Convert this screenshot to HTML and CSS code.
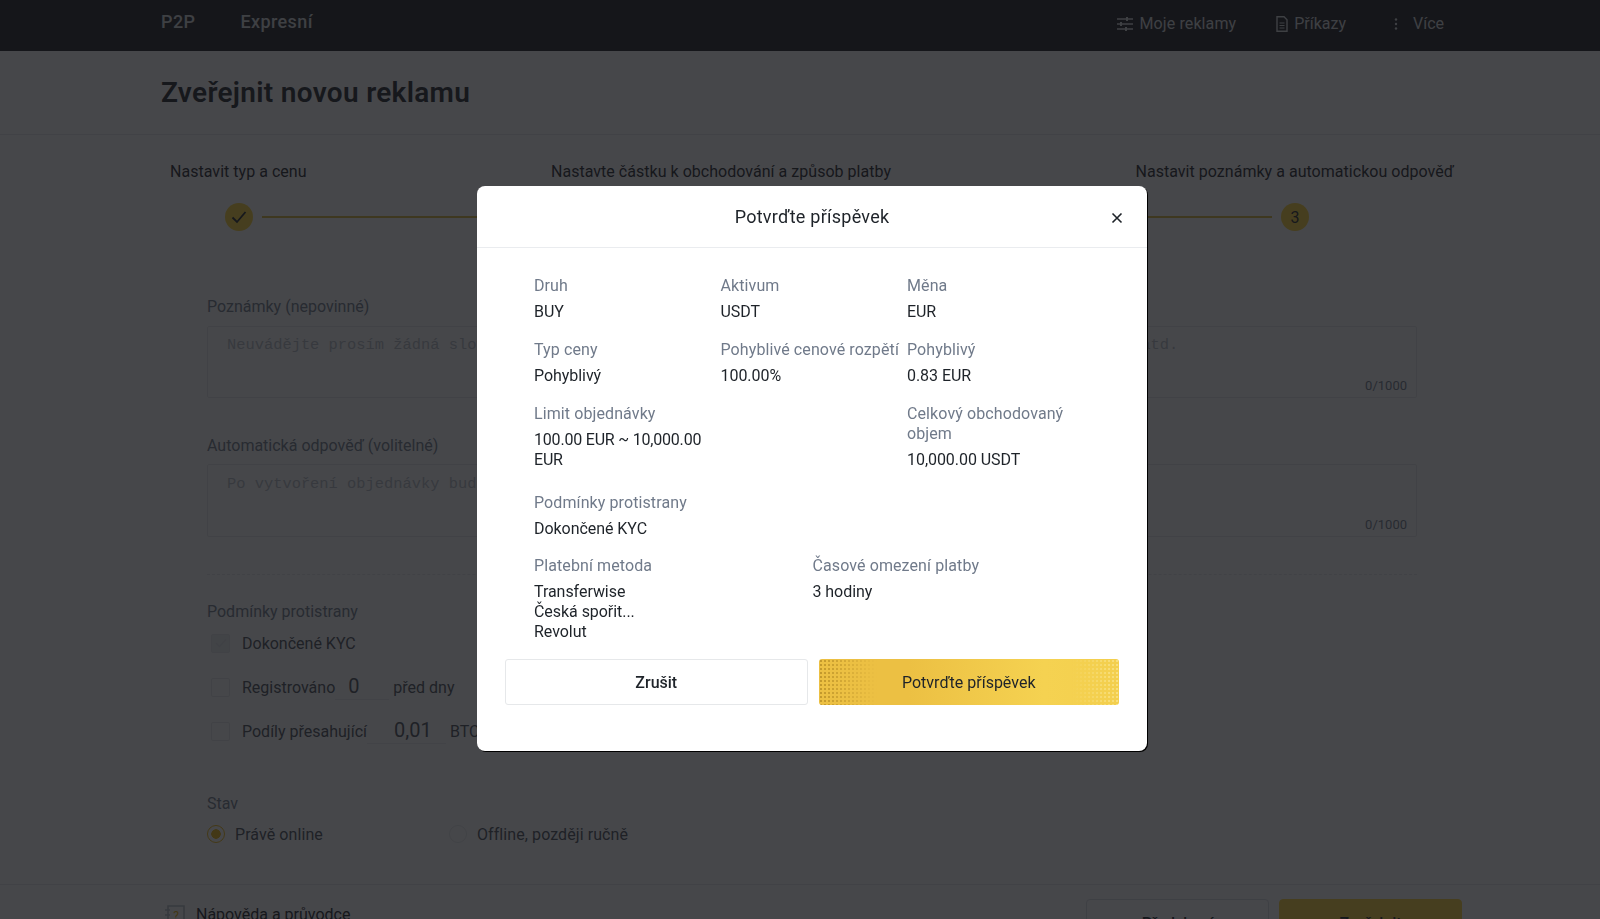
FILE: index.html
```html
<!DOCTYPE html>
<html lang="cs">
<head>
<meta charset="utf-8">
<title>Zveřejnit novou reklamu</title>
<link rel="stylesheet" href="styles.css">
</head>
<body>
<div class="page">
  <nav class="nav">
    <div class="nav-left"><a>P2P</a><a>Expresní</a></div>
    <div class="nav-right">
      <a class="gap-m"><svg class="ico" viewBox="0 0 16 14" width="16" height="14"><path d="M0 2h16M0 7h16M0 12h16" stroke="currentColor" stroke-width="1.6"/><path d="M10 0v4M4 5v4M9 10v4" stroke="currentColor" stroke-width="2"/></svg>Moje reklamy</a>
      <a class="gap-s"><svg class="ico" viewBox="0 0 12 16" width="12" height="16"><path d="M1 .8h7l3 3v11.4H1z" fill="none" stroke="currentColor" stroke-width="1.4"/><path d="M3.5 7h5M3.5 9.5h5M3.5 12h5" stroke="currentColor" stroke-width="1.2"/></svg>Příkazy</a>
      <a class="more"><svg class="ico" viewBox="0 0 4 12" width="4" height="12"><circle cx="2" cy="1.5" r="1.2" fill="currentColor"/><circle cx="2" cy="6" r="1.2" fill="currentColor"/><circle cx="2" cy="10.5" r="1.2" fill="currentColor"/></svg>Více</a>
    </div>
  </nav>
  <header class="head"><h1>Zveřejnit novou reklamu</h1></header>
  <section class="stepper">
    <div class="step-labels">
      <span>Nastavit typ a cenu</span>
      <span>Nastavte částku k obchodování a způsob platby</span>
      <span>Nastavit poznámky a automatickou odpověď</span>
    </div>
    <div class="step-track">
      <span class="dot"><svg viewBox="0 0 16 14" width="16" height="14"><path d="M1.5 7.5l4.5 4.5L14.5 2" fill="none" stroke="#1e2329" stroke-width="1.8"/></svg></span>
      <i class="line"></i>
      <span class="dot"></span>
      <i class="line"></i>
      <span class="dot">3</span>
    </div>
  </section>
  <main class="form">
    <label class="lbl">Poznámky (nepovinné)</label>
    <div class="ta">
      <textarea class="area" placeholder="Neuvádějte prosím žádná slova týkající se kryptoměn, jako BTC, USDT, ETH, ani bankovní účet, apod. atd."></textarea>
      <span class="count">0/1000</span>
    </div>
    <label class="lbl second">Automatická odpověď (volitelné)</label>
    <div class="ta tall">
      <textarea class="area" placeholder="Po vytvoření objednávky bude tato zpráva odeslána protistraně."></textarea>
      <span class="count">0/1000</span>
    </div>
    <div class="dash"></div>
    <label class="lbl cond">Podmínky protistrany</label>
    <div class="chk first"><span class="box on"><svg viewBox="0 0 12 10" width="12" height="10"><path d="M1 5l3.5 3.5L11 1.5" fill="none" stroke="#dfe2e6" stroke-width="1.4"/></svg></span>Dokončené KYC</div>
    <div class="chk"><span class="box"></span>Registrováno<span class="num w1">0</span>před dny</div>
    <div class="chk"><span class="box"></span>Podíly přesahující<span class="num w2">0,01</span>BTC</div>
    <label class="lbl stav">Stav</label>
    <div class="radios">
      <span class="radio"><i class="rd on"></i>Právě online</span>
      <span class="radio"><i class="rd"></i>Offline, později ručně</span>
    </div>
  </main>
  <footer class="foot">
    <div class="help"><svg viewBox="0 0 20 20" width="20" height="20"><path d="M3 1h16v18H3z" fill="none" stroke="#b7bdc6" stroke-width="1.6"/><path d="M0 5h5M0 10h5M0 15h5" stroke="#b7bdc6" stroke-width="1.4"/><text x="11" y="15" font-size="12" text-anchor="middle" fill="#f0b90b">?</text></svg>Nápověda a průvodce</div>
    <div class="foot-btns"><button class="fb">Předchozí</button><button class="fb pri">Zveřejnit</button></div>
  </footer>
</div>
<div class="mask">
  <div class="modal">
    <div class="m-head">Potvrďte příspěvek
      <svg class="close" viewBox="0 0 12 12" width="12" height="12"><path d="M1.5 1.5l9 9M10.5 1.5l-9 9" stroke="#1e2329" stroke-width="1.6"/></svg>
    </div>
    <div class="m-body">
      <div class="g3">
        <div class="it"><p>Druh</p><b>BUY</b></div>
        <div class="it"><p>Aktivum</p><b>USDT</b></div>
        <div class="it"><p>Měna</p><b>EUR</b></div>
        <div class="it"><p>Typ ceny</p><b>Pohyblivý</b></div>
        <div class="it"><p>Pohyblivé cenové rozpětí</p><b>100.00%</b></div>
        <div class="it"><p>Pohyblivý</p><b>0.83 EUR</b></div>
        <div class="it tallrow"><p>Limit objednávky</p><b>100.00 EUR ~ 10,000.00 EUR</b></div>
        <div class="it"></div>
        <div class="it"><p>Celkový obchodovaný objem</p><b>10,000.00 USDT</b></div>
        <div class="it"><p>Podmínky protistrany</p><b>Dokončené KYC</b></div>
      </div>
      <div class="g2">
        <div class="it"><p>Platební metoda</p><b>Transferwise</b><b>Česká spořit...</b><b>Revolut</b></div>
        <div class="it"><p>Časové omezení platby</p><b>3 hodiny</b></div>
      </div>
    </div>
    <div class="m-btns">
      <button class="mb">Zrušit</button>
      <button class="mb gold">Potvrďte příspěvek</button>
    </div>
  </div>
</div>
</body>
</html>
```
FILE: styles.css
```css
* { box-sizing: border-box; }
html, body { margin: 0; height: 100%; }
body { overflow: hidden; background: #fff; font-family: "Roboto", "Liberation Sans", sans-serif; color: #1e2329; font-size: 16px; }
.page { height: 919px; overflow: hidden; }
.nav { height: 51px; background: #181a20; color: #d8dbdf; display: flex; justify-content: space-between; padding: 0 156px 0 161px; }
.nav-left { display: flex; gap: 45px; font-size: 18px; font-weight: 500; padding-top: 11px; letter-spacing: .4px; }
.nav-right { display: flex; align-items: center; font-size: 16px; padding-bottom: 4px; }
.nav-right a { display: flex; align-items: center; }
.nav-right .ico { margin-right: 8px; }
.nav-right .gap-m { letter-spacing: .1px; }
.nav-right .gap-m .ico { margin-right: 7px; }
.gap-s { margin-left: 40px; }
.nav-right .gap-s .ico { margin-right: 6px; }
.more { margin-left: 48px; }
.nav-right .more .ico { margin-right: 15px; }
.head { height: 84px; border-bottom: 1px solid #e6e8ea; padding: 24px 161px 0; }
h1 { margin: 0; font-size: 28px; line-height: 36px; font-weight: 600; letter-spacing: .3px; }
.stepper { padding: 27px 146px 0 170px; }
.step-labels { display: flex; justify-content: space-between; font-size: 16px; line-height: 20px; color: #1e2329; letter-spacing: .03px; }
.step-track { display: flex; align-items: center; margin: 21px 145px 0 55px; }
.dot { width: 28px; height: 28px; border-radius: 50%; background: #fcd535; display: flex; align-items: center; justify-content: center; font-size: 16px; }
.line { flex: 1; height: 2px; margin: 0 9px; background: #d9b83a; }
.form { padding: 66px 183px 0 207px; }
.lbl { display: block; font-size: 16px; line-height: 20px; color: #707a8a; }
.ta { position: relative; height: 72px; margin-top: 9px; border: 1px solid #e6e8ea; border-radius: 2px; }
.ta.tall { height: 73px; margin-top: 8px; }
.area { display: block; width: 100%; height: 100%; border: 0; outline: 0; resize: none; background: none; padding: 8px 19px; font-family: "Liberation Mono", monospace; font-size: 15.4px; line-height: 20px; overflow: hidden; }
.tall .area { padding-top: 9px; }
.area::placeholder { color: #b7bdc6; }
.count { position: absolute; right: 9px; bottom: 3px; font-size: 13px; line-height: 16px; color: #707a8a; }
.second { margin-top: 38px; }
.dash { margin-top: 37px; border-top: 1px dashed #e6e8ea; }
.cond { margin-top: 27px; }
.chk { display: flex; align-items: center; height: 24px; margin-top: 20px; padding-left: 4px; font-size: 16px; color: #474d57; }
.chk.first { margin-top: 9px; }
.box { width: 19px; height: 19px; margin-right: 12px; border: 1px solid #e6e8ea; border-radius: 2px; display: flex; align-items: center; justify-content: center; }
.box.on { background: #eceef0; }
.num { display: block; font-size: 20px; line-height: 24px; height: 26px; color: #474d57; border-bottom: 1px solid #eaecef; margin: 0 4px 0 0; }
.w1 { width: 54px; padding-left: 13px; }
.w2 { width: 79px; padding-left: 27px; }
.stav { margin-top: 51px; }
.radios { display: flex; margin-top: 10px; font-size: 16px; color: #474d57; letter-spacing: .08px; }
.radio { display: flex; align-items: center; width: 242px; height: 20px; }
.rd { width: 18px; height: 18px; margin-right: 10px; border-radius: 50%; border: 1px solid #e6e8ea; display: block; }
.rd.on { border: 1.5px solid #f0b90b; background: radial-gradient(circle, #f0b90b 0 4.5px, transparent 5px); }
.foot { margin-top: 40px; border-top: 1px solid #e6e8ea; display: flex; justify-content: space-between; padding: 14px 138px 0 165px; }
.help { display: flex; align-items: flex-start; gap: 11px; font-size: 16px; padding-top: 6px; line-height: 20px; }
.foot-btns { display: flex; gap: 10px; }
.fb { width: 183px; height: 48px; border: 1px solid #d8dce1; border-radius: 4px; background: #fff; font: 500 16px "Roboto", sans-serif; color: #1e2329; }
.fb.pri { background: #fcd535; border-color: #fcd535; }
.mask { position: fixed; inset: 0; background: rgba(20, 21, 26, .79); }
.modal { position: absolute; left: 477px; top: 186px; width: 670px; height: 565px; background: #fff; border-radius: 8px; box-shadow: 1px 1px 0 #000; }
.m-head { position: relative; height: 62px; border-bottom: 1px solid #eaecef; text-align: center; font-size: 18px; line-height: 61px; color: #1e2329; letter-spacing: .25px; }
.close { position: absolute; right: 24px; top: 26px; }
.m-body { padding: 28px 28px 0 57px; font-size: 16px; line-height: 20px; }
.g3 { display: grid; grid-template-columns: repeat(3, 186.5px); row-gap: 18px; }
.g2 { display: grid; grid-template-columns: repeat(2, 278.5px); margin-top: 17px; }
.it p { margin: 0 0 6px; color: #707a8a; letter-spacing: .1px; }
.it b { display: block; font-weight: 400; color: #1e2329; letter-spacing: -.05px; }
.it.tallrow b { letter-spacing: -.2px; }
.tallrow { margin-bottom: 5px; }
.m-btns { display: flex; gap: 11px; padding: 17px 28px 0; }
.mb { flex: 1 1 0; min-width: 0; padding: 0; height: 46px; border-radius: 3px; border: 1px solid #e6e8ea; background: #fff; font: 500 16px "Roboto", sans-serif; color: #1e2329; position: relative; overflow: hidden; }
.gold { border: 0; font-weight: 400; background: linear-gradient(90deg, #ecc043 0%, #ecc043 30%, #f5d251 75%, #f3cf4e 100%); }
.gold::before, .gold::after { content: ""; position: absolute; top: 0; bottom: 0; background-size: 4px 4px; }
.gold::before { left: 0; width: 58px; background-image: radial-gradient(circle, rgba(150,110,20,.5) .7px, transparent 1px); -webkit-mask-image: linear-gradient(90deg, #000, transparent); mask-image: linear-gradient(90deg, #000, transparent); }
.gold::after { right: 0; width: 48px; background-image: radial-gradient(circle, rgba(255,245,190,.45) .7px, transparent 1px); -webkit-mask-image: linear-gradient(270deg, #000, transparent); mask-image: linear-gradient(270deg, #000, transparent); }
```
